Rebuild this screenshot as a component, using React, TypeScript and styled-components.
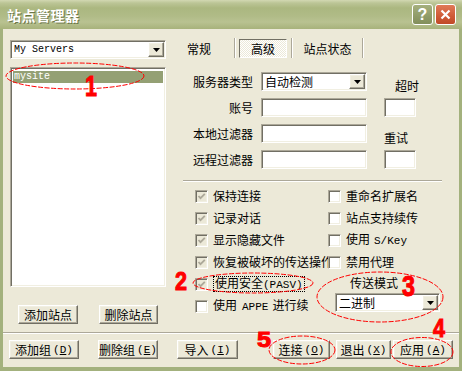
import React from "react";
import styled, { createGlobalStyle, css } from "styled-components";

const GlobalStyle = createGlobalStyle`
  html, body { margin: 0; padding: 0; background: #ece9d8; }
  body {
    font-family: "Noto Sans CJK SC", "Noto Sans", sans-serif;
    font-size: 12px;
    color: #000;
  }
`;

const sunken = css`
  box-sizing: border-box;
  border: 1px solid;
  border-color: #aca899 #fff #fff #aca899;
  box-shadow: inset 1px 1px 0 #716f64, inset -1px -1px 0 #f1efe2;
  background: #fff;
`;

const raised = css`
  box-sizing: border-box;
  border: 1px solid;
  border-color: #fff #716f64 #716f64 #fff;
  box-shadow: inset -1px -1px 0 #aca899, inset 1px 1px 0 #f1efe2;
  background: #ece9d8;
`;

const Window = styled.div`
  position: relative;
  width: 462px;
  height: 371px;
  display: flex;
  flex-direction: column;
  overflow: hidden;
`;

const TitleBar = styled.div`
  height: 29px;
  flex: none;
  display: flex;
  align-items: center;
  padding: 0 6px 0 7px;
  background: linear-gradient(
    180deg,
    #d2d8b2 0px,
    #bcc596 3px,
    #abb780 8px,
    #b0bb87 16px,
    #b9c291 22px,
    #a7b27b 29px
  );
`;

const Title = styled.div`
  color: #fff;
  font-size: 14px;
  font-weight: bold;
  letter-spacing: 0.5px;
  text-shadow: 1px 1px 0 #6c7648;
`;

const Controls = styled.div`
  margin-left: auto;
  display: flex;
  gap: 2px;
`;

const CapButton = styled.div<{ $close?: boolean }>`
  width: 21px;
  height: 21px;
  box-sizing: border-box;
  border: 1px solid #fff;
  border-radius: 3px;
  display: flex;
  align-items: center;
  justify-content: center;
  color: #fff;
  font-family: "Liberation Sans", sans-serif;
  font-weight: bold;
  font-size: 16px;
  background: ${(p) =>
    p.$close
      ? "linear-gradient(180deg, #e07a58 0%, #cf5a36 60%, #c04a28 100%)"
      : "linear-gradient(180deg, #a6b07e 0%, #8f9b68 60%, #838f5c 100%)"};
`;

const Frame = styled.div`
  flex: 1;
  display: flex;
  flex-direction: column;
  background: #ece9d8;
  border: solid #a3b17d;
  border-width: 0 3px 4px 3px;
`;

const Body = styled.div`
  height: 303px;
  display: flex;
`;

const LeftPane = styled.div`
  width: 177px;
  flex: none;
  box-sizing: border-box;
  padding: 11px 0 0 7px;
  display: flex;
  flex-direction: column;
`;

// latin text in the dialog uses a fixed-width face
const Mono = styled.span<{ $size?: number; $ml?: number; $mr?: number }>`
  font-family: "Liberation Mono", monospace;
  font-size: ${(p) => p.$size ?? 11}px;
  margin-left: ${(p) => p.$ml ?? 0}px;
  margin-right: ${(p) => p.$mr ?? 0}px;
`;

const Acc = styled.span`
  font-family: "Liberation Mono", monospace;
  font-size: 11px;
  text-decoration: underline;
`;

const ComboBox = styled.div<{ $w: number }>`
  ${sunken};
  width: ${(p) => p.$w}px;
  height: 19px;
  display: flex;
  align-items: center;
  padding: 0 1px 0 3px;
  white-space: nowrap;
`;

const ComboArrow = styled.div`
  ${raised};
  margin-left: auto;
  width: 16px;
  height: 15px;
  flex: none;
  display: flex;
  align-items: center;
  justify-content: center;
`;

const ListBox = styled.div`
  ${sunken};
  width: 156px;
  height: 220px;
  margin-top: 8px;
  padding: 3px 2px;
`;

const ListItem = styled.div`
  height: 12px;
  line-height: 12px;
  padding-left: 1px;
  background: #94a074;
  color: #fff;
  font-family: "Liberation Mono", monospace;
  font-size: 10px;
`;

const ButtonRow = styled.div`
  display: flex;
  gap: 21px;
  margin-top: 18px;
  padding-left: 8px;
`;

const Button = styled.div<{ $w: number; $ml?: number }>`
  ${raised};
  width: ${(p) => p.$w}px;
  margin-left: ${(p) => p.$ml ?? 0}px;
  height: 19px;
  display: flex;
  align-items: center;
  justify-content: center;
  white-space: nowrap;
  line-height: 14px;
`;

const RightPane = styled.div`
  flex: 1;
  display: flex;
  flex-direction: column;
`;

const TabBar = styled.div`
  margin-top: 9px;
  height: 20px;
  display: flex;
  padding-left: 7px;
`;

const Tab = styled.div<{ $w: number; $center?: boolean }>`
  width: ${(p) => p.$w}px;
  display: flex;
  align-items: center;
  justify-content: ${(p) => (p.$center ? "center" : "flex-start")};
`;

const TabSep = styled.div`
  width: 0;
  border-left: 1px solid #aca899;
  border-right: 1px solid #fff;
`;

const ActiveTabSlot = styled.div`
  width: 55px;
  box-sizing: border-box;
  padding: 0 3px;
  display: flex;
  align-items: flex-end;
`;

const ActiveTab = styled.div`
  box-sizing: border-box;
  width: 48px;
  height: 19px;
  border: 1px solid;
  border-color: #716f64 #fff #fff #716f64;
  background: repeating-conic-gradient(#fff 0 25%, #ece9d8 0 50%) 0 0 / 2px 2px;
  display: flex;
  align-items: center;
  justify-content: center;
`;

const Form = styled.div`
  margin-top: 14px;
  padding-left: 10px;
  display: grid;
  grid-template-columns: 63px 106px 41px;
  grid-auto-rows: 19px;
  column-gap: 8px;
  row-gap: 7px;
`;

const FieldLabel = styled.div`
  text-align: right;
  align-self: center;
  white-space: nowrap;
  line-height: 14px;
`;

const SideLabel = styled.div<{ $offset: number }>`
  align-self: end;
  margin-left: ${(p) => 9 + p.$offset}px;
  margin-bottom: -3px;
  line-height: 16px;
  white-space: nowrap;
`;

const TextInput = styled.div<{ $w: number }>`
  ${sunken};
  width: ${(p) => p.$w}px;
  height: 19px;
`;

const SmallInput = styled(TextInput)`
  margin-left: 9px;
`;

const HRule = styled.div`
  margin: 11px 0 0 3px;
  width: 259px;
  border-top: 1px solid #aca899;
  border-bottom: 1px solid #fff;
`;

const CheckGrid = styled.div`
  margin-top: 3px;
  padding-left: 15px;
  display: grid;
  grid-template-columns: 133px 1fr;
  grid-auto-rows: 22px;
`;

const CheckCell = styled.div`
  display: flex;
  align-items: center;
  gap: 5px;
  overflow: hidden;
  white-space: nowrap;
  line-height: 14px;
`;

const Box = styled.div<{ $disabled?: boolean }>`
  ${sunken};
  width: 13px;
  height: 13px;
  flex: none;
  background: ${(p) => (p.$disabled ? "#ece9d8" : "#fff")};
  display: flex;
  align-items: center;
  justify-content: center;
`;

const FocusRect = styled.span`
  border: 1px dotted #000;
  padding: 0 1px;
  line-height: 12px;
`;

const TransferGroup = styled.div`
  grid-column: 2;
  grid-row: 5 / span 2;
  display: flex;
  flex-direction: column;
  padding-top: 2px;
`;

const GroupLabel = styled.div`
  padding-left: 22px;
  line-height: 16px;
`;

const TransferCombo = styled(ComboBox)`
  margin: 2px 0 0 7px;
`;

const Divider = styled.div`
  border-top: 1px solid #aca899;
  border-bottom: 1px solid #fff;
`;

const BottomRow = styled.div`
  display: flex;
  padding: 6px 6px 0 6px;
`;

const LeftGroup = styled.div`
  display: flex;
  gap: 19px;
`;

const RightGroup = styled.div`
  display: flex;
  margin-left: auto;
`;

const Overlay = styled.svg`
  position: absolute;
  left: 0;
  top: 0;
  pointer-events: none;
`;

const Arrow = () => (
  <svg width="7" height="4" viewBox="0 0 7 4">
    <path d="M0 0 H7 L3.5 4 Z" fill="#000" />
  </svg>
);

const Check = ({ checked, disabled }: { checked?: boolean; disabled?: boolean }) => (
  <Box $disabled={disabled}>
    {checked && (
      <svg width="9" height="9" viewBox="0 0 9 9">
        <path d="M1.5 4 L3.5 6.2 L7.8 1.8" stroke={disabled ? "#aca899" : "#000"} strokeWidth="1.8" fill="none" />
      </svg>
    )}
  </Box>
);

const Accel = ({ k }: { k: string }) => (
  <>
    <Mono $ml={2}>(</Mono>
    <Acc>{k}</Acc>
    <Mono>)</Mono>
  </>
);

type Mark = { cx: number; cy: number; rx: number; ry: number };
const ellipses: Mark[] = [
  { cx: 75, cy: 76, rx: 69, ry: 13 },
  { cx: 253, cy: 283, rx: 60, ry: 10 },
  { cx: 380, cy: 297, rx: 63, ry: 25 },
  { cx: 302, cy: 350, rx: 33, ry: 14 },
  { cx: 422, cy: 352, rx: 31, ry: 14.5 },
];

type Num = { t: string; x: number; y: number; size: number; w: number };
const numbers: Num[] = [
  { t: "1", x: 85, y: 96, size: 29, w: 12 },
  { t: "2", x: 175, y: 290, size: 25, w: 12 },
  { t: "3", x: 402, y: 296, size: 29, w: 13 },
  { t: "4", x: 433, y: 337, size: 26, w: 12 },
  { t: "5", x: 257, y: 347, size: 22, w: 14 },
];

export default function App() {
  return (
    <>
      <GlobalStyle />
      <Window>
        <TitleBar>
          <Title>站点管理器</Title>
          <Controls>
            <CapButton>?</CapButton>
            <CapButton $close>
              <svg width="11" height="11" viewBox="0 0 11 11">
                <path d="M1.5 1.5 L9.5 9.5 M9.5 1.5 L1.5 9.5" stroke="#fff" strokeWidth="2.2" />
              </svg>
            </CapButton>
          </Controls>
        </TitleBar>
        <Frame>
          <Body>
            <LeftPane>
              <ComboBox $w={156}>
                <Mono $size={10}>My Servers</Mono>
                <ComboArrow>
                  <Arrow />
                </ComboArrow>
              </ComboBox>
              <ListBox>
                <ListItem>mysite</ListItem>
              </ListBox>
              <ButtonRow>
                <Button $w={60}>添加站点</Button>
                <Button $w={59}>删除站点</Button>
              </ButtonRow>
            </LeftPane>

            <RightPane>
              <TabBar>
                <Tab $w={47}>常规</Tab>
                <TabSep />
                <ActiveTabSlot>
                  <ActiveTab>高级</ActiveTab>
                </ActiveTabSlot>
                <TabSep />
                <Tab $w={69} $center>
                  站点状态
                </Tab>
                <TabSep />
              </TabBar>

              <Form>
                <FieldLabel>服务器类型</FieldLabel>
                <ComboBox $w={106}>
                  自动检测
                  <ComboArrow>
                    <Arrow />
                  </ComboArrow>
                </ComboBox>
                <SideLabel $offset={11}>超时</SideLabel>

                <FieldLabel>账号</FieldLabel>
                <TextInput $w={106} />
                <SmallInput $w={32} />

                <FieldLabel>本地过滤器</FieldLabel>
                <TextInput $w={106} />
                <SideLabel $offset={0}>重试</SideLabel>

                <FieldLabel>远程过滤器</FieldLabel>
                <TextInput $w={106} />
                <SmallInput $w={32} />
              </Form>

              <HRule />

              <CheckGrid>
                <CheckCell>
                  <Check checked disabled />
                  保持连接
                </CheckCell>
                <CheckCell>
                  <Check />
                  重命名扩展名
                </CheckCell>
                <CheckCell>
                  <Check checked disabled />
                  记录对话
                </CheckCell>
                <CheckCell>
                  <Check />
                  站点支持续传
                </CheckCell>
                <CheckCell>
                  <Check checked disabled />
                  显示隐藏文件
                </CheckCell>
                <CheckCell>
                  <Check />
                  <span>
                    使用<Mono $ml={4}>S/Key</Mono>
                  </span>
                </CheckCell>
                <CheckCell>
                  <Check checked disabled />
                  恢复被破坏的传送操作
                </CheckCell>
                <CheckCell>
                  <Check />
                  禁用代理
                </CheckCell>
                <CheckCell>
                  <Check checked disabled />
                  <FocusRect>
                    使用安全<Mono>(PASV)</Mono>
                  </FocusRect>
                </CheckCell>
                <TransferGroup>
                  <GroupLabel>传送模式</GroupLabel>
                  <TransferCombo $w={105}>
                    二进制
                    <ComboArrow>
                      <Arrow />
                    </ComboArrow>
                  </TransferCombo>
                </TransferGroup>
                <CheckCell>
                  <Check />
                  <span>
                    使用<Mono $ml={5} $mr={4}>APPE</Mono>进行续
                  </span>
                </CheckCell>
              </CheckGrid>
            </RightPane>
          </Body>

          <Divider />

          <BottomRow>
            <LeftGroup>
              <Button $w={70}>
                添加组<Accel k="D" />
              </Button>
              <Button $w={60}>
                删除组<Accel k="E" />
              </Button>
              <Button $w={61}>
                导入<Accel k="I" />
              </Button>
            </LeftGroup>
            <RightGroup>
              <Button $w={57}>
                连接<Accel k="O" />
              </Button>
              <Button $w={55} $ml={6}>
                退出<Accel k="X" />
              </Button>
              <Button $w={60} $ml={2}>
                应用<Accel k="A" />
              </Button>
            </RightGroup>
          </BottomRow>
        </Frame>

        <Overlay width="462" height="371" viewBox="0 0 462 371">
          {ellipses.map((e, i) => (
            <ellipse
              key={i}
              cx={e.cx}
              cy={e.cy}
              rx={e.rx}
              ry={e.ry}
              fill="none"
              stroke="#ff0000"
              strokeWidth="1"
              strokeDasharray="5 1.5"
            />
          ))}
          {numbers.map((n) => (
            <text
              key={n.t}
              x={n.x}
              y={n.y}
              fontFamily="Liberation Sans, sans-serif"
              fontWeight="900"
              fontSize={n.size}
              fill="#ff0000"
              stroke="#ff0000"
              strokeWidth="1"
              textLength={n.w}
              lengthAdjust="spacingAndGlyphs"
            >
              {n.t}
            </text>
          ))}
        </Overlay>
      </Window>
    </>
  );
}
